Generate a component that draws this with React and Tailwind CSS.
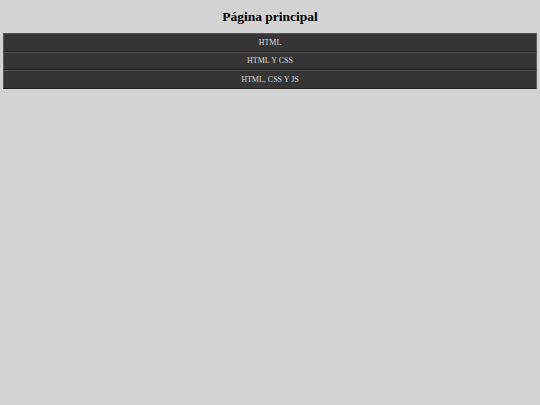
export default function App() {
  const items = ["HTML", "HTML Y CSS", "HTML, CSS Y JS"];
  return (
    <div className="min-h-[405px] w-full bg-[#d3d3d3] pt-[8px]" style={{ fontFamily: '"Liberation Serif", serif' }}>
      <h1 className="text-center text-[13.5px] font-bold leading-[17px] text-black">Página principal</h1>
      <div className="mx-[3px] mt-[8px] flex flex-col">
        {items.map((t) => (
          <div
            key={t}
            className="flex h-[18.5px] items-center justify-center border-x border-t border-b border-x-[#5a5a5a] border-t-[#555] border-b-[#1e1e1e] bg-[#353535] pt-px text-[8px] text-[#dcdcdc]"
          >
            {t}
          </div>
        ))}
      </div>
    </div>
  );
}
